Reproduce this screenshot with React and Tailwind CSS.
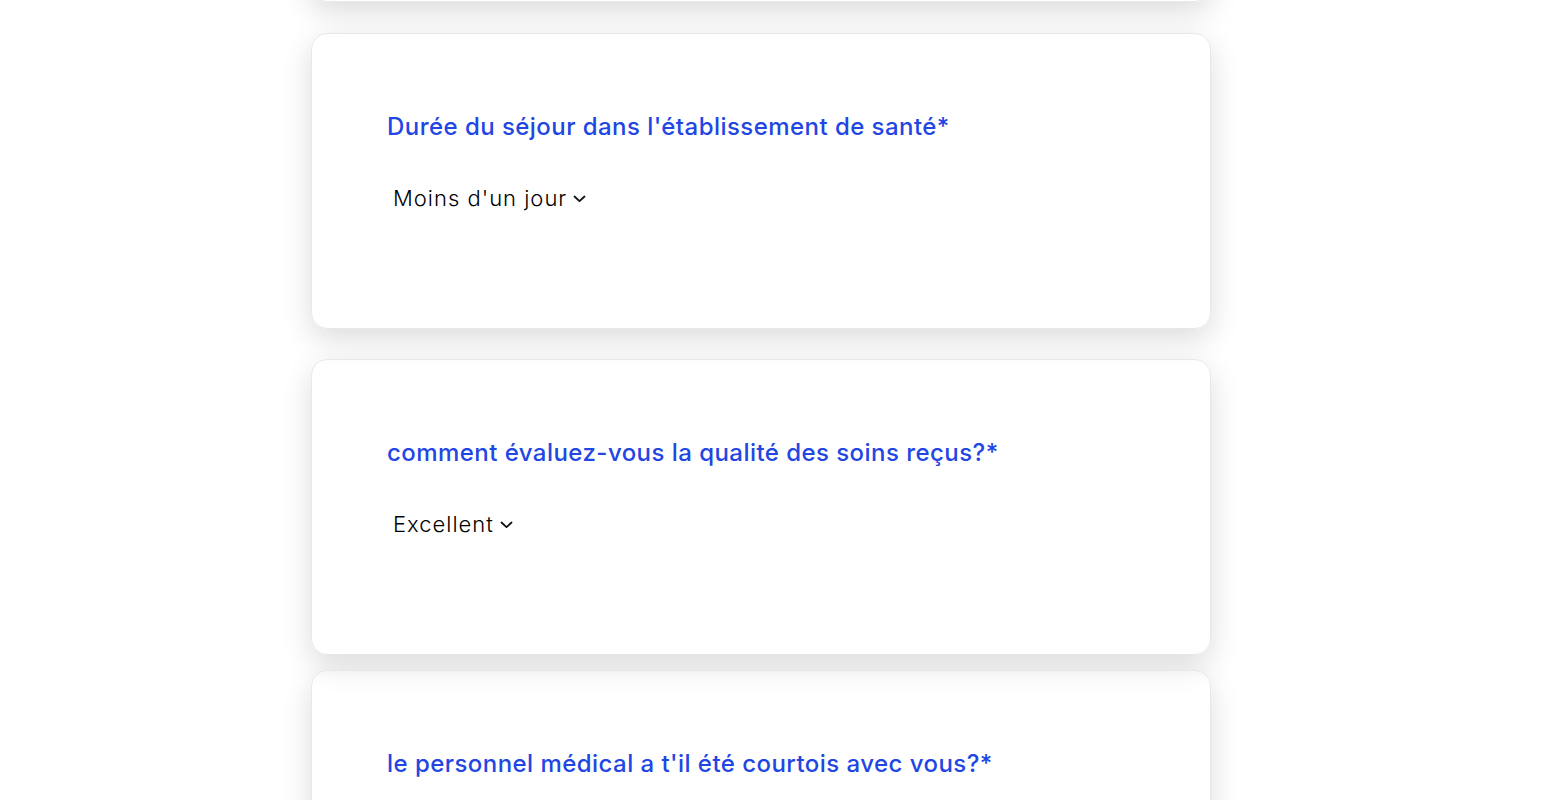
import React from "react";

function Chevron() {
  return (
    <svg width="13" height="8" viewBox="0 0 13 8" className="ml-[6px] mt-[2px]" fill="none">
      <path d="M1.5 1.5 L6.5 6.2 L11.5 1.5" stroke="#111" strokeWidth="1.8" strokeLinecap="round" strokeLinejoin="round" />
    </svg>
  );
}

function Card({ title, value, className = "" }) {
  return (
    <div
      className={
        "h-[296px] w-[900px] rounded-[16px] border border-[#e8e8e8] shadow-[0_10px_30px_rgba(0,0,0,0.14)] pl-[75px] pt-[78px] " +
        className
      }
    >
      <div className="text-[24px] leading-[30px] font-medium text-[#2146e3] tracking-[0.45px]">{title}</div>
      {value && (
        <div className="mt-[42px] ml-[6px] flex items-center text-[22px] leading-[28px] font-light tracking-[1px] text-black">
          <span>{value}</span>
          <Chevron />
        </div>
      )}
    </div>
  );
}

export default function App() {
  return (
    <div className="min-h-[800px] w-full overflow-hidden bg-white font-['Inter','Noto_Sans',sans-serif]">
      <div className="ml-[311px] flex flex-col">
        <div className="mt-[-291px] h-[293px] w-[900px] rounded-[16px] border border-[#e8e8e8] shadow-[0_10px_30px_rgba(0,0,0,0.14)]" />
        <Card className="mt-[31px]" title="Durée du séjour dans l'établissement de santé*" value="Moins d'un jour" />
        <Card className="mt-[30px]" title="comment évaluez-vous la qualité des soins reçus?*" value="Excellent" />
        <Card className="mt-[15px]" title="le personnel médical a t'il été courtois avec vous?*" />
      </div>
    </div>
  );
}
